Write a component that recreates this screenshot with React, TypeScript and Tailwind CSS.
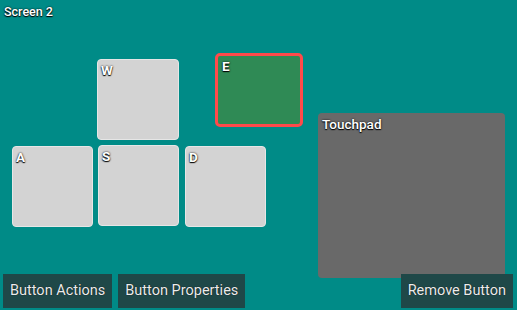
import React from "react"

type Key = { label: string; x: number; y: number; w: number; h: number; selected?: boolean }

// positions on the editor canvas are the content itself
const keys: Key[] = [
  { label: "W", x: 97, y: 59, w: 82, h: 81 },
  { label: "A", x: 12, y: 146, w: 81, h: 81 },
  { label: "S", x: 98, y: 145, w: 81, h: 81 },
  { label: "D", x: 185, y: 146, w: 81, h: 81 },
  { label: "E", x: 215, y: 53, w: 88, h: 74, selected: true },
]

const shadow = "[text-shadow:0_0_2px_#000,0_1px_1px_#000]"

function ToolButton({ children }: { children: React.ReactNode }) {
  return (
    <button className="h-[34px] px-[7px] bg-[#1f4848] text-[14.5px] text-[#ececec] [text-shadow:0_0_1px_#000]">
      {children}
    </button>
  )
}

export default function App() {
  return (
    <div
      className="relative w-[517px] h-[310px] overflow-hidden bg-[#008b87] text-white"
      style={{ fontFamily: "Roboto, 'Liberation Sans', sans-serif" }}
    >
      <div className={`absolute left-[4px] top-[3px] text-[12.5px] font-medium ${shadow}`}>Screen 2</div>

      {keys.map((k) => (
        <div
          key={k.label}
          className={
            k.selected
              ? "absolute rounded-[5px] border-[3px] border-[#ff4a4a] bg-[#2f8a55] px-[4px] py-[4px]"
              : "absolute rounded-[4px] border border-[#e6e6e6] bg-[#d3d3d3] px-[3px] py-[4px]"
          }
          style={{ left: k.x, top: k.y, width: k.w, height: k.h }}
        >
          <span className={`block text-[13.5px] font-bold leading-none ${shadow}`}>{k.label}</span>
        </div>
      ))}

      <div className="absolute left-[318px] top-[113px] w-[187px] h-[165px] rounded-[4px] bg-[#696969] px-[4px] py-[5px]">
        <span className={`block text-[13.5px] font-medium leading-none ${shadow}`}>Touchpad</span>
      </div>

      <div className="absolute left-[3px] right-[4px] bottom-[2px] flex items-end justify-between">
        <div className="flex gap-[6px]">
          <ToolButton>Button Actions</ToolButton>
          <ToolButton>Button Properties</ToolButton>
        </div>
        <ToolButton>Remove Button</ToolButton>
      </div>
    </div>
  )
}
